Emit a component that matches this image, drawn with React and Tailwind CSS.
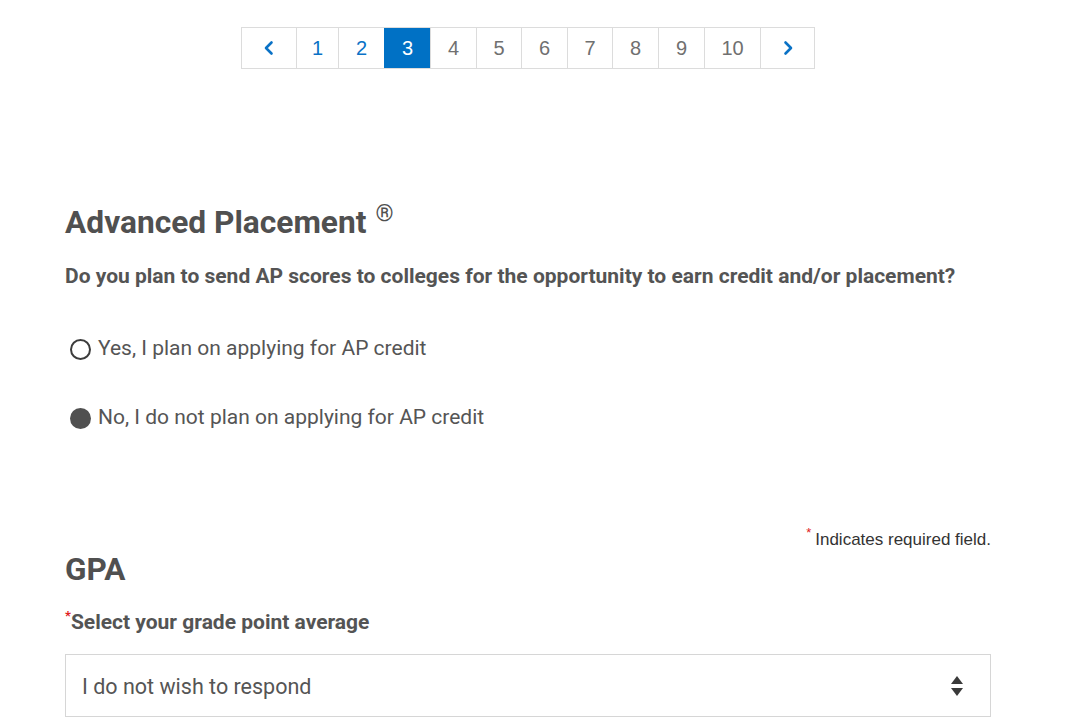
import React from "react";

const pages = [
  { label: "1", w: "w-[42px]" },
  { label: "2", w: "w-[46px]" },
  { label: "3", w: "w-[46px]", active: true },
  { label: "4", w: "w-[46px]" },
  { label: "5", w: "w-[45px]" },
  { label: "6", w: "w-[46px]" },
  { label: "7", w: "w-[45px]" },
  { label: "8", w: "w-[46px]" },
  { label: "9", w: "w-[46px]" },
  { label: "10", w: "w-[56px]" },
];

function Chevron({ dir }) {
  return (
    <svg width="12" height="16" viewBox="0 0 12 16" fill="none">
      {dir === "left" ? (
        <path d="M8.5 2.5 L3 8 L8.5 13.5" stroke="#0a72c6" strokeWidth="2.6" strokeLinecap="round" strokeLinejoin="round" />
      ) : (
        <path d="M3.5 2.5 L9 8 L3.5 13.5" stroke="#0a72c6" strokeWidth="2.6" strokeLinecap="round" strokeLinejoin="round" />
      )}
    </svg>
  );
}

function Pagination() {
  return (
    <div className="flex justify-center">
      <div className="flex h-[42px] border border-[#dcdcdc] font-['Liberation_Sans',Arial,sans-serif] text-[20px]">
        <div className="w-[54px] flex items-center justify-center bg-white">
          <Chevron dir="left" />
        </div>
        {pages.map((p) => (
          <div
            key={p.label}
            className={
              p.active
                ? `${p.w} flex items-center justify-center border-l border-[#0071c5] bg-[#0071c5] text-white`
                : p.label === "1" || p.label === "2"
                ? `${p.w} flex items-center justify-center border-l border-[#dcdcdc] bg-white text-[#0a72c6]`
                : `${p.w} flex items-center justify-center border-l border-[#dcdcdc] bg-white text-[#707070]`
            }
          >
            {p.label}
          </div>
        ))}
        <div className="w-[54px] flex items-center justify-center border-l border-[#dcdcdc] bg-white">
          <Chevron dir="right" />
        </div>
      </div>
    </div>
  );
}

function Radio({ checked, label }) {
  return (
    <label className="flex items-center gap-[7px] h-[30px]">
      {checked ? (
        <span className="w-[21px] h-[21px] rounded-full bg-[#505050] ml-[5px]" />
      ) : (
        <span className="w-[21px] h-[21px] rounded-full border-[2px] border-[#3c3c3c] ml-[5px]" />
      )}
      <span className="text-[21px] text-[#555555]">{label}</span>
    </label>
  );
}

export default function App() {
  return (
    <div className="min-h-[727px] bg-white font-['Roboto',sans-serif] text-[#555555]">
      <div className="ml-[65px] w-[926px] pt-[27px]">
        <Pagination />

        <h2 className="mt-[136px] text-[31.7px] leading-[36px] font-bold text-[#505050] flex items-start">
          <span>Advanced Placement</span>
          <span className="ml-[9px] text-[23px] leading-[23px] font-normal relative top-[-3px]">®</span>
        </h2>
        <p className="mt-[21px] text-[21px] leading-[28px] font-bold text-[#545454]">
          Do you plan to send AP scores to colleges for the opportunity to earn credit and/or placement?
        </p>

        <div className="mt-[44px]">
          <Radio label="Yes, I plan on applying for AP credit" />
        </div>
        <div className="mt-[39px]">
          <Radio checked label="No, I do not plan on applying for AP credit" />
        </div>

        <div className="mt-[94px] flex justify-end">
          <span className="font-['Liberation_Sans',Arial,sans-serif] text-[17px] text-[#333333]">
            <span className="text-[#e02020] text-[13px] relative top-[-8px] mr-[4px]">*</span>
            Indicates required field.
          </span>
        </div>

        <h2 className="mt-[-1px] text-[31.5px] leading-[36px] font-bold text-[#505050]">GPA</h2>
        <p className="mt-[20px] text-[21px] leading-[28px] font-bold text-[#545454]">
          <span className="text-[#e02020] text-[13px] relative top-[-9px]">*</span>
          Select your grade point average
        </p>

        <div className="mt-[15px] h-[63px] border border-[#d6d6d6] flex items-center justify-between pl-[16px] pr-[26px] pt-[5px]">
          <span className="text-[21.5px] text-[#555555]">I do not wish to respond</span>
          <svg width="14" height="22" viewBox="0 0 14 22" className="mt-[-4px]">
            <path d="M7 1 L13 9 L1 9 Z" fill="#3a3a3a" />
            <path d="M1 13 L13 13 L7 21 Z" fill="#3a3a3a" />
          </svg>
        </div>
      </div>
    </div>
  );
}
